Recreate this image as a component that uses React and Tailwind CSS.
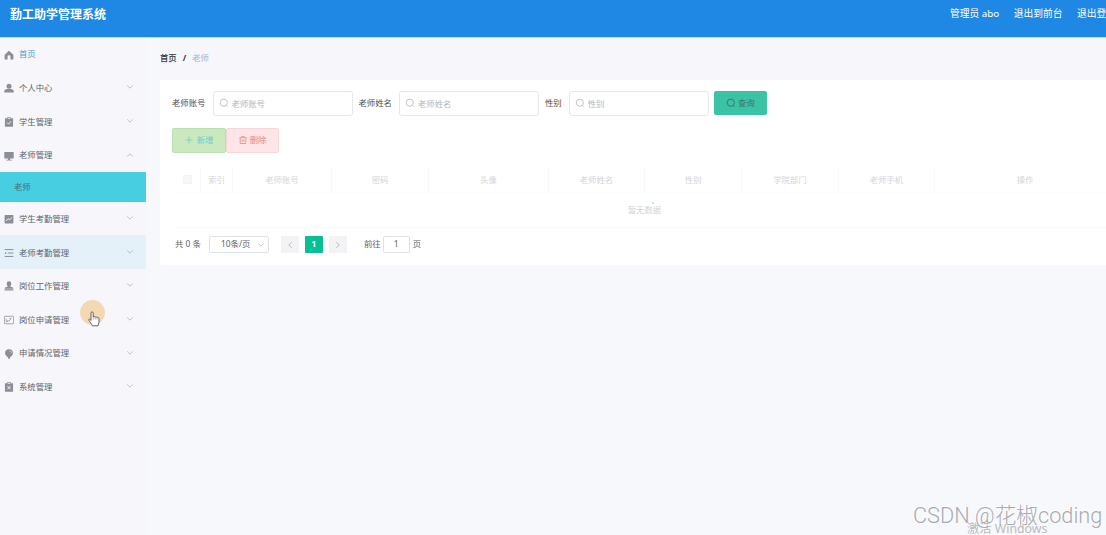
import clsx from "clsx";

// Small solid menu icons, all on a 16x16 grid
const ICONS = {
  home: <path d="M8 1 1 7.500V15H5.700V10.500a2.300 2.300 0 0 1 4.600 0V15H15V7.500z" />,
  user: (
    <>
      <circle cx="8" cy="5" r="4" />
      <path d="M.5 15v-2C.5 10.500 3 9.700 8 9.700s7.500.8 7.500 3.300v2z" />
    </>
  ),
  clipboard: (
    <>
      <path fillRule="evenodd" d="M1.500 2h3.500V.5h6V2h3.500V15.500h-13zM6 3h4V2H6z" />
      <path d="m5 9 2.300 2.300L11.300 7" fill="none" stroke="#f6f6fb" strokeWidth="1.500" />
    </>
  ),
  monitor: <path d="M0.500 1.500h15v10.500h-15zM6.500 12h3v2h3v1.200h-9V14h3z" />,
  chart: (
    <>
      <rect x="1" y="1.500" width="14" height="13.500" rx="1" />
      <path d="m3.500 11 3-3.500 2.500 2 3.500-4" fill="none" stroke="#f6f6fb" strokeWidth="1.500" />
    </>
  ),
  list: (
    <>
      <path d="M1 2.500h14M6 8h9M1 13.500h14" stroke="currentColor" strokeWidth="1.600" />
      <path d="M1.500 6.200 4.300 8 1.500 9.800z" />
    </>
  ),
  stamp: <path d="M8 .5a3.700 3.700 0 0 1 3.700 3.700c0 2-1.500 2.600-1.500 4.800 2.500.3 4.800.8 4.800 3.500H1c0-2.700 2.300-3.200 4.800-3.500 0-2.200-1.500-2.800-1.500-4.800A3.700 3.700 0 0 1 8 .5zM1 13.300h14V15H1z" />,
  board: (
    <g fill="none" stroke="currentColor">
      <rect x="0.600" y="2" width="14.800" height="12" rx="1" strokeWidth="1.200" />
      <path d="M3.500 6v4.500h3M5.500 8l2 2 4-4.500h-2.500" strokeWidth="1.200" />
    </g>
  ),
  balloon: (
    <>
      <path d="M8 .5a6.300 6.300 0 0 1 6.300 6.300C14.300 10 11 12.500 9.500 13.500V15.500h-3V13.500C5 12.500 1.700 10 1.700 6.800A6.300 6.300 0 0 1 8 .5z" />
      <path d="M8.500 3a3.600 3.600 0 0 1 3.500 3.500" fill="none" stroke="#f6f6fb" strokeWidth="0.800" />
    </>
  ),
  clipboardX: (
    <>
      <path fillRule="evenodd" d="M1.500 2h3.500V.5h6V2h3.500V15.500h-13zM6 3h4V2H6z" />
      <path d="m5.500 6.500 5 5m0-5-5 5" fill="none" stroke="#f6f6fb" strokeWidth="1.500" />
    </>
  ),
};

const MENU = [
  { label: "首页", icon: "home" },
  { label: "个人中心", icon: "user", sub: true },
  { label: "学生管理", icon: "clipboard", sub: true },
  { label: "老师管理", icon: "monitor", sub: true, open: true, children: ["老师"] },
  { label: "学生考勤管理", icon: "chart", sub: true },
  { label: "老师考勤管理", icon: "list", sub: true, hovered: true },
  { label: "岗位工作管理", icon: "stamp", sub: true },
  { label: "岗位申请管理", icon: "board", sub: true },
  { label: "申请情况管理", icon: "balloon", sub: true },
  { label: "系统管理", icon: "clipboardX", sub: true },
];

const COLUMNS = [
  { label: "索引", width: "w-8" },
  { label: "老师账号", width: "w-[99px]" },
  { label: "密码", width: "w-[97px]" },
  { label: "头像", width: "w-[120px]" },
  { label: "老师姓名", width: "w-[96px]" },
  { label: "性别", width: "w-[97px]" },
  { label: "学院部门", width: "w-[97px]" },
  { label: "老师手机", width: "w-[96px]" },
  { label: "操作", width: "w-[181px]" },
];

function Chevron({ className }) {
  return (
    <svg viewBox="0 0 10 10" className={className} fill="none" stroke="currentColor">
      <path d="m1.500 3 3.500 3.500L8.500 3" />
    </svg>
  );
}

function SearchIcon({ className }) {
  return (
    <svg viewBox="0 0 10 10" className={clsx("h-[10px] w-[10px] shrink-0", className)} fill="none" stroke="currentColor">
      <circle cx="4.800" cy="4.700" r="3.600" />
      <path d="m7.300 7.300 1.400 1.400" />
    </svg>
  );
}

function MenuItem({ item }) {
  return (
    <>
      <div className={clsx("flex h-[33.6px] items-center pr-3 pl-1", item.hovered && "bg-[#e4f1f8]")}>
        <svg
          viewBox="0 0 16 16"
          className={clsx("h-[10px] w-[10px] shrink-0 text-[#8b8e96]", item.sub ? "mt-px" : "mt-[2px]")}
          fill="currentColor"
        >
          {ICONS[item.icon]}
        </svg>
        <span className={clsx("ml-[5px] flex-1", item.sub ? "pt-px text-[#606468]" : "text-[#4f9bc8]")}>
          {item.label}
        </span>
        {item.sub && (
          <Chevron className={clsx("-mt-px h-2 w-2 text-[#b0b3ba]", item.open && "rotate-180")} />
        )}
      </div>
      {item.children?.map((child) => (
        <div key={child} className="flex h-[30px] items-center bg-[#48cee1] pl-[14px] text-[#44717c]">
          {child}
        </div>
      ))}
    </>
  );
}

function SearchField({ label, className }) {
  return (
    <div className={clsx("flex items-center", className)}>
      <span className="text-[#4c4e53]">{label}</span>
      <div className="ml-[7px] flex h-[25px] w-[140px] items-center rounded-[3px] border border-[#e6e7ec] bg-white pl-[5px] text-[#b4b6bd]">
        <SearchIcon className="-mt-px text-[#c0c2c8]" />
        <input className="ml-[3px] w-24 outline-none placeholder:text-[#b4b6bd]" placeholder={label} />
      </div>
    </div>
  );
}

function DataTable() {
  return (
    <div className="mt-[13px] ml-3 w-[945px] text-[#d3d4d8]">
      <div className="flex h-[27px] border-b border-[#fbfbfc]">
        <div className="flex w-[29px] items-center justify-center border-r border-[#f9f9fb]">
          <span className="mt-[2px] ml-[3px] h-[9px] w-[9px] rounded-[1px] border border-[#f1f3f7] bg-[#f6f7fb]" />
        </div>
        {COLUMNS.map((col) => (
          <div
            key={col.label}
            className={clsx("flex shrink-0 items-center justify-center border-r border-[#f9f9fb] pt-[3px]", col.width)}
          >
            {col.label}
          </div>
        ))}
      </div>
      <div className="relative flex h-[35px] items-center justify-center border-b border-[#fafafb] pt-px">
        暂无数据
        {/* loading spinner at its smallest */}
        <span className="absolute top-[9px] left-[480px] h-[2px] w-[2px] rounded-full bg-[#a9e3d3]" />
      </div>
    </div>
  );
}

function Pagination() {
  return (
    <div className="mt-[8px] flex h-[18px] items-center pl-[15px] text-[#606266]">
      <span className="w-[34px]">共 0 条</span>
      <div className="flex h-[17px] w-[60px] items-center rounded-[2px] border border-[#dfe1e6] bg-white pr-[3px] pl-[11px]">
        <span className="flex-1">10条/页</span>
        <Chevron className="h-2 w-2 text-[#b4b7be]" />
      </div>
      <button className="ml-3 flex h-[17px] w-[18px] items-center justify-center bg-[#f3f3f6]">
        <Chevron className="h-2 w-2 rotate-90 text-[#a5a8ae]" />
      </button>
      <button className="ml-[6px] flex h-[17px] w-[18px] items-center justify-center rounded-[1px] bg-[#05c094] font-bold text-white">
        1
      </button>
      <button className="ml-[6px] flex h-[17px] w-[18px] items-center justify-center bg-[#f3f3f6]">
        <Chevron className="h-2 w-2 -rotate-90 text-[#a5a8ae]" />
      </button>
      <span className="ml-[17px]">前往</span>
      <span className="ml-[2px] flex h-[17px] w-[27px] items-center justify-center rounded-[2px] border border-[#dfe1e6]">
        1
      </span>
      <span className="ml-[3px]">页</span>
    </div>
  );
}

function Pointer() {
  return (
    <div className="absolute top-[300px] left-[80px] h-[25px] w-[25px] rounded-full bg-[#f3d9b3]">
      <svg viewBox="0 0 12 16" className="absolute top-[11px] left-[8px] h-[16px] w-[12px]">
        <path
          d="M3 9.500V2a1.100 1.100 0 0 1 2.200 0v4c.3-.8 1.900-.7 2 .3.400-.7 1.700-.5 1.900.4.500-.6 1.900-.4 1.900.8V11c0 1.500-.9 2.300-1 3.800H4.200C4 13 1.800 11.500.9 9.200c-.4-1.200.9-1.700 1.500-.8z"
          fill="#fff"
          stroke="#55565c"
          strokeWidth="0.900"
        />
        <path d="M5.200 6v2.500M7.200 6.500v2M9.100 7v1.500" stroke="#77787e" strokeWidth="0.600" />
      </svg>
    </div>
  );
}

export default function App() {
  return (
    <div className="relative flex h-[535px] w-[1106px] flex-col overflow-hidden bg-[#f6f8fc] font-['Noto_Sans','Noto_Sans_CJK_SC',sans-serif] text-[8.4px] leading-none whitespace-nowrap">
      <header className="flex h-[37.5px] shrink-0 justify-between border-b border-[#b5ddf7] bg-[#1f88e5] text-white">
        <h1 className="mt-[9px] ml-[10px] text-[12px] font-bold">勤工助学管理系统</h1>
        <nav className="mt-[9px] flex w-[156px] shrink-0 gap-[14.5px] text-[9.75px]">
          <span className="shrink-0">管理员 abo</span>
          <span className="shrink-0">退出到前台</span>
          <span className="shrink-0">退出登录</span>
        </nav>
      </header>

      <div className="flex min-h-0 flex-1">
        <aside className="w-[146px] shrink-0 bg-[#f6f6fb]">
          {MENU.map((item) => (
            <MenuItem key={item.label} item={item} />
          ))}
        </aside>

        <main className="min-w-0 flex-1 pl-[14px]">
          <div className="flex h-[42px] items-center bg-[#f6f6fb] text-[#303133]">
            <span className="font-medium">首页</span>
            <span className="mx-[6px] font-bold">/</span>
            <span className="text-[#a9b3c6]">老师</span>
          </div>

          <section className="h-[185.500px] overflow-hidden rounded-l-[2px] bg-white pt-[11px]">
            <div className="flex items-center pl-3">
              <SearchField label="老师账号" />
              <SearchField label="老师姓名" className="ml-[6px]" />
              <SearchField label="性别" className="ml-[6px]" />
              <button className="ml-[5px] flex h-6 w-[53px] items-center justify-center rounded-[2px] bg-[#3bc3a5] text-[#43746b]">
                <SearchIcon className="mr-[2px]" />
                查询
              </button>
            </div>

            <div className="mt-3 flex pl-3">
              <button className="flex h-[25px] w-[54px] items-center justify-center rounded-[2px] border border-[#b9dfb0] bg-[#cbe9bf] text-[#62cfd5]">
                <svg viewBox="0 0 8 8" className="mr-1 h-2 w-2" stroke="currentColor" strokeWidth="0.800">
                  <path d="M4 .5v7M.5 4h7" />
                </svg>
                新增
              </button>
              <button className="flex h-[25px] w-[53px] items-center justify-center rounded-[2px] border border-[#f9d5d7] bg-[#fee6e8] text-[#f08285]">
                <svg viewBox="0 0 8 8" className="mr-[3px] h-2 w-2" fill="none" stroke="currentColor" strokeWidth="0.800">
                  <path d="M.3 1.700h7.400M2.800 1.500V.5h2.400v1M1.200 1.700v5.800h5.600V1.700M3.100 3.300v2.600M4.900 3.300v2.600" />
                </svg>
                删除
              </button>
            </div>

            <DataTable />
            <Pagination />
          </section>
        </main>
      </div>

      <Pointer />

      {/* Watermarks */}
      <span className="absolute top-[523px] left-[967px] text-[12.3px] text-[#b9bbc0]">激活 Windows</span>
      <span className="absolute top-[505px] left-[913px] font-['Roboto','Noto_Sans_CJK_SC',sans-serif] text-[21.7px] font-light text-[#a9abaf] [text-shadow:-1px_-1px_0_#fff]">
        CSDN @花椒coding
      </span>
    </div>
  );
}
